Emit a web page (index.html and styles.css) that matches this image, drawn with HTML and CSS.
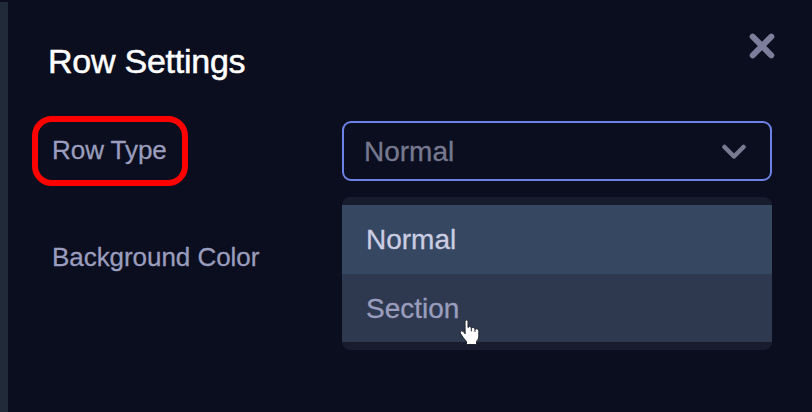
FILE: index.html
```
<!DOCTYPE html>
<html lang="en">
<head>
    <meta charset="UTF-8">
    <meta name="viewport" content="width=device-width, initial-scale=1.0">
    <title>Row Settings</title>
    <link rel="stylesheet" href="styles.css">
</head>
<body>

<div class="page">
    <div class="edge"></div>
    <div class="panel">
        <div class="header">
            <h1>Row Settings</h1>
            <button class="close" aria-label="Close">
                <svg width="26" height="26" viewBox="0 0 26 26">
                    <path d="M3.7 3.7L22.3 22.3M22.3 3.7L3.7 22.3"/>
                </svg>
            </button>
        </div>

        <div class="field">
            <div class="label marked">Row Type</div>
            <div class="select">
                <div class="select-box">
                    <span class="select-value">Normal</span>
                    <svg class="arrow" width="24" height="16" viewBox="0 0 24 16">
                        <path d="M2.5 3L12 12.5L21.5 3"/>
                    </svg>
                </div>
                <div class="menu">
                    <div class="option active">Normal</div>
                    <div class="option">
                        Section
                        <svg class="cursor" width="22" height="27" viewBox="0 0 22 27">
                            <path d="M6 2.5Q6 1 7.5 1Q9 1 9 2.5V8.5Q10.5 6.5 12.3 8.3V9Q14.3 7.5 16 9.5V10.2Q19.8 8.8 19.8 12.5V18Q19.4 20.5 17.5 22.5V25.5H7.5V22.5Q4.5 19.5 1.2 14Q0.8 12 2.8 11.8Q4.5 12 6 14.5Z"/>
                            <path class="crease" d="M12.3 9V12M16 10.2V12.5"/>
                        </svg>
                    </div>
                </div>
            </div>
        </div>

        <div class="field">
            <div class="label">Background Color</div>
        </div>
    </div>
</div>

</body>
</html>
```
FILE: styles.css
```
* {
    box-sizing: border-box;
}
body {
    margin: 0;
    background-color: #0b0e1e;
    font-family: "Liberation Sans", Arial, sans-serif;
}
.page {
    display: flex;
    height: 412px;
    overflow: hidden;
}
.edge {
    width: 8px;
    margin-top: 2px;
    background-color: #212a39;
}
.panel {
    flex: 1;
    padding: 33px 40px 0 24px;
}
.header {
    display: flex;
    justify-content: space-between;
    height: 83px;
    padding-left: 16px;
}
h1 {
    margin: 8px 0 0;
    font-size: 34px;
    line-height: 40px;
    font-weight: normal;
    letter-spacing: -0.25px;
    color: #fff;
    -webkit-text-stroke: 0.5px #fff;
}
.close {
    width: 26px;
    height: 26px;
    margin-right: -3px;
    padding: 0;
    border: none;
    background: none;
    cursor: pointer;
}
svg {
    display: block;
    fill: none;
    stroke-linecap: round;
    stroke-linejoin: round;
}
.close svg {
    stroke: #7c7f9b;
    stroke-width: 6;
}
.field {
    display: grid;
    grid-template-columns: 310px 430px;
    height: 106px;
}
.label {
    width: max-content;
    height: 70px;
    padding: 6px 0 0 14px;
    border: 6px solid transparent;
    border-radius: 20px;
    font-size: 26px;
    line-height: 46px;
    letter-spacing: -0.05px;
    white-space: nowrap;
    color: #9a9dbd;
    -webkit-text-stroke: 0.3px #9a9dbd;
}
.marked {
    width: 156px;
    padding-top: 5px;
    border-color: #ff0000;
}
.select {
    position: relative;
    padding-top: 5px;
}
.select-box {
    display: flex;
    align-items: center;
    justify-content: space-between;
    height: 60px;
    padding: 2px 24px 0 20px;
    border: 2px solid #6c82e4;
    border-radius: 9px;
    font-size: 28px;
    color: #76798f;
    -webkit-text-stroke: 0.3px #76798f;
}
.arrow {
    stroke: #777a91;
    stroke-width: 4.5;
}
.menu {
    position: absolute;
    top: 81px;
    left: 0;
    width: 430px;
    padding: 8px 0;
    border-radius: 8px;
    background-color: #171d2e;
    font-size: 28px;
}
.option {
    position: relative;
    height: 68px;
    padding-left: 24px;
    line-height: 70px;
    color: #9a9dbd;
    background-color: #2e3950;
    -webkit-text-stroke: 0.3px #9a9dbd;
}
.active {
    height: 69px;
    color: #cbcde3;
    background-color: #364761;
    -webkit-text-stroke: 0.3px #cbcde3;
}
.cursor {
    position: absolute;
    top: 45px;
    left: 117px;
    fill: #fff;
    stroke: #20242f;
    stroke-width: 1;
}
.crease {
    fill: none;
}
```
